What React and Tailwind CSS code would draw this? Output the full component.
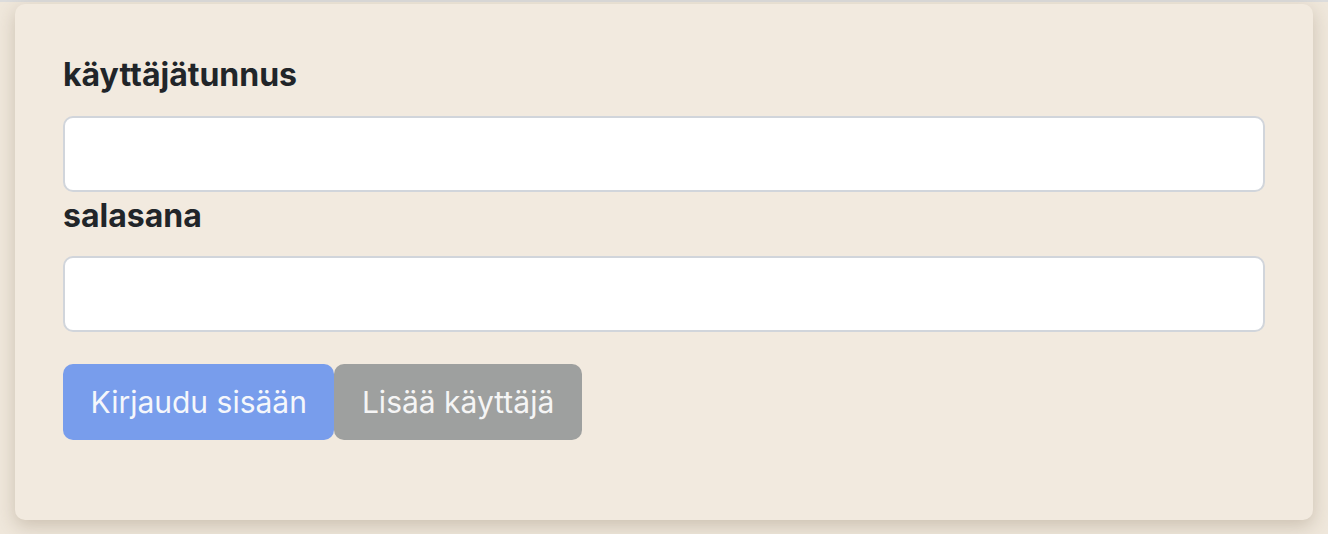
export default function App() {
  return (
    <div className="min-h-screen bg-[#efe7db] font-['Inter',sans-serif]">
      <div className="h-[2px] bg-[#dcdcdc]" />
      <div className="px-[15px] pt-[2px]">
        <form className="rounded-[10px] bg-[#f2eadf] px-12 pt-[47px] pb-[80px] shadow-[0_6px_18px_rgba(80,60,30,0.22)]">
          <label className="block text-[32px] font-bold leading-[48px] text-[#212529]">
            käyttäjätunnus
          </label>
          <input
            type="text"
            className="mt-[17px] block h-[76px] w-full rounded-[10px] border-2 border-[#d1d5db] bg-white px-4 outline-none"
          />
          <label className="block text-[32px] font-bold leading-[48px] text-[#212529]">
            salasana
          </label>
          <input
            type="password"
            className="mt-[16px] block h-[76px] w-full rounded-[10px] border-2 border-[#d1d5db] bg-white px-4 outline-none"
          />
          <div className="mt-[32px] flex">
            <button
              type="submit"
              className="h-[76px] rounded-[10px] bg-[#789dec] px-[27.5px] text-[30px] text-[#f5f7fb]"
            >
              Kirjaudu sisään
            </button>
            <button
              type="button"
              className="h-[76px] rounded-[10px] bg-[#9ea09f] px-[27.5px] text-[30px] text-[#f5f5f5]"
            >
              Lisää käyttäjä
            </button>
          </div>
        </form>
      </div>
    </div>
  );
}
